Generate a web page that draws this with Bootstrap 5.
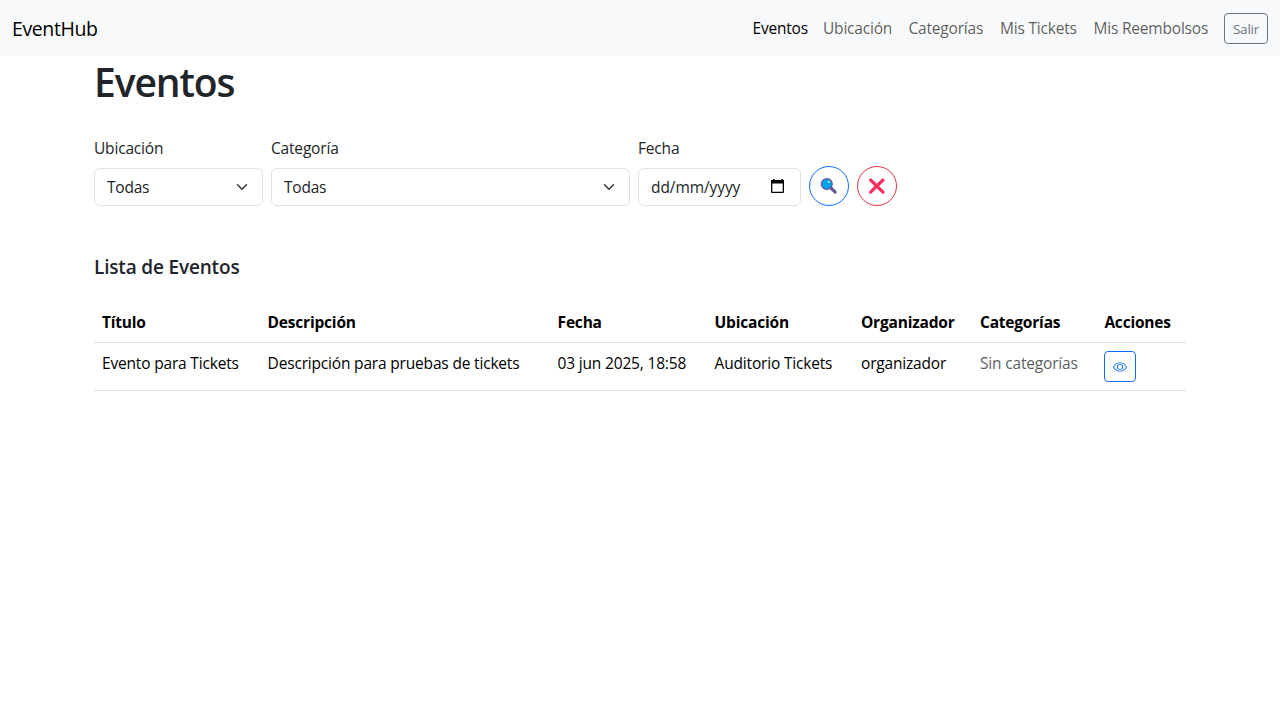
<!DOCTYPE html>
<html lang="es">
<head>
<meta charset="utf-8">
<meta name="viewport" content="width=device-width, initial-scale=1">
<title>EventHub - Eventos</title>
<link href="https://cdn.jsdelivr.net/npm/bootstrap@5.3.0/dist/css/bootstrap.min.css" rel="stylesheet">
<style>
  body { font-family: "Open Sans", "Noto Sans", sans-serif; font-size: 15.5px; line-height: 24px; letter-spacing: -.18px; }
  .navbar { height: 56px; }
  .navbar-brand { font-size: 19.5px; line-height: 30px; letter-spacing: -.4px; color: #000; padding-top: 6px; }
  .top-links .nav-link { font-size: 15.5px; letter-spacing: -.2px; white-space: nowrap; }
  .w-eventos { width: 70.5px; }
  .w-ubicacion { width: 85.5px; }
  .w-categorias { width: 91.5px; }
  .w-tickets { width: 93.5px; }
  .w-reembolsos { width: 130.5px; }
  .btn-salir { width: 44px; height: 31px; padding: 1px 0 0; font-size: 13.5px; line-height: 28px; letter-spacing: -.2px; }
  h1 { font-size: 39px; height: 48px; line-height: 51px; font-weight: 600; letter-spacing: -1.1px; }
  h2.list-title { font-size: 19px; height: 24px; line-height: 26px; font-weight: 560; letter-spacing: -.17px; }
  .form-select, .form-control { font-size: 15.5px; line-height: 24px; height: 38px; letter-spacing: -.22px; }
  .date-text { letter-spacing: -.08px; }
  .date-icon { margin-right: -2px; }
  .f-ubicacion { width: 169px; }
  .f-categoria { width: 359px; }
  .f-fecha { width: 163px; }
  .btn-round { width: 40px; height: 40px; }
  .events-table { table-layout: fixed; --bs-table-color: #000; }
  .events-table th, .events-table td { white-space: nowrap; }
  .events-table th { letter-spacing: -.2px; }
  .btn-eye { width: 32px; height: 31px; }
  .c1 { width: 165.6px; } .c2 { width: 290px; } .c3 { width: 157px; } .c4 { width: 146.4px; }
  .c5 { width: 119px; } .c6 { width: 124.4px; }
</style>
</head>
<body>
<nav class="navbar navbar-expand navbar-light bg-light py-0">
  <div class="container-fluid">
    <a class="navbar-brand" href="#">EventHub</a>
    <ul class="navbar-nav top-links ms-auto align-items-center">
      <li class="nav-item w-eventos"><a class="nav-link active" href="#">Eventos</a></li>
      <li class="nav-item w-ubicacion"><a class="nav-link" href="#">Ubicación</a></li>
      <li class="nav-item w-categorias"><a class="nav-link" href="#">Categorías</a></li>
      <li class="nav-item w-tickets"><a class="nav-link" href="#">Mis Tickets</a></li>
      <li class="nav-item w-reembolsos"><a class="nav-link" href="#">Mis Reembolsos</a></li>
      <li class="nav-item ms-2"><button class="btn btn-sm btn-outline-secondary btn-salir d-block">Salir</button></li>
    </ul>
  </div>
</nav>
<main class="container">
  <div class="px-2 mx-1">
    <h1 class="mb-4">Eventos</h1>
    <form class="d-flex align-items-end gap-2 mb-5 pt-2">
      <div class="f-ubicacion">
        <label class="form-label d-block" for="ubicacion">Ubicación</label>
        <select class="form-select" id="ubicacion"><option>Todas</option></select>
      </div>
      <div class="f-categoria">
        <label class="form-label d-block" for="categoria">Categoría</label>
        <select class="form-select" id="categoria"><option>Todas</option></select>
      </div>
      <div class="f-fecha">
        <div class="form-label">Fecha</div>
        <div class="form-control d-flex align-items-center justify-content-between">
          <span class="date-text">dd/mm/yyyy</span>
          <svg class="date-icon" width="20" height="16" viewBox="0 0 20 16"><path fill="#000" fill-rule="evenodd" d="M3 0h1.600v1h6.800V0H13v1h1v12q0 1-1 1H2q-1 0-1-1V1h2zM2.300 4.500v8.200h10.400V4.500z"/></svg>
        </div>
      </div>
      <button type="button" class="btn btn-outline-primary rounded-circle btn-round p-0 d-flex align-items-center justify-content-center" aria-label="Buscar">
        <svg width="18" height="18" viewBox="0 0 18 18"><path d="M11 11l4.200 4.100" stroke="#6b5794" stroke-width="3.200" stroke-linecap="round"/><circle cx="6.800" cy="7" r="5.400" fill="#00a6ed" stroke="#6b5794" stroke-width="1.300"/><circle cx="8.800" cy="4.900" r="1" fill="#c8eeff"/></svg>
      </button>
      <button type="button" class="btn btn-outline-danger rounded-circle btn-round p-0 d-flex align-items-center justify-content-center" aria-label="Limpiar">
        <svg width="18" height="18" viewBox="0 0 18 18"><path d="M2.600 3l12.400 12.200M15 3L2.600 15.200" stroke="#f92f60" stroke-width="3.200" stroke-linecap="round"/></svg>
      </button>
    </form>
    <h2 class="list-title">Lista de Eventos</h2>
    <table class="table events-table mb-0 mt-4">
      <colgroup><col class="c1"><col class="c2"><col class="c3"><col class="c4"><col class="c5"><col class="c6"><col></colgroup>
      <thead>
        <tr><th>Título</th><th>Descripción</th><th>Fecha</th><th>Ubicación</th><th>Organizador</th><th>Categorías</th><th>Acciones</th></tr>
      </thead>
      <tbody>
        <tr>
          <td>Evento para Tickets</td><td>Descripción para pruebas de tickets</td><td>03 jun 2025, 18:58</td><td>Auditorio Tickets</td><td>organizador</td>
          <td><span class="text-muted">Sin categorías</span></td>
          <td><button class="btn btn-sm btn-outline-primary btn-eye p-0 d-flex align-items-center justify-content-center" aria-label="Ver">
            <svg width="14" height="14" viewBox="0 0 16 16" fill="currentColor"><path d="M16 8s-3-5.500-8-5.500S0 8 0 8s3 5.500 8 5.500S16 8 16 8M1.173 8a13 13 0 0 1 1.660-2.043C4.120 4.668 5.880 3.500 8 3.500s3.879 1.168 5.168 2.457A13 13 0 0 1 14.828 8q-.086.130-.195.288c-.335.480-.830 1.120-1.465 1.755C11.879 11.332 10.119 12.500 8 12.500s-3.879-1.168-5.168-2.457A13 13 0 0 1 1.172 8z"/><path d="M8 5.500a2.500 2.500 0 1 0 0 5 2.500 2.500 0 0 0 0-5M4.500 8a3.500 3.500 0 1 1 7 0 3.500 3.500 0 0 1-7 0"/></svg>
          </button></td>
        </tr>
      </tbody>
    </table>
  </div>
</main>
<script src="https://cdn.jsdelivr.net/npm/bootstrap@5.3.0/dist/js/bootstrap.bundle.min.js"></script>
</body>
</html>
